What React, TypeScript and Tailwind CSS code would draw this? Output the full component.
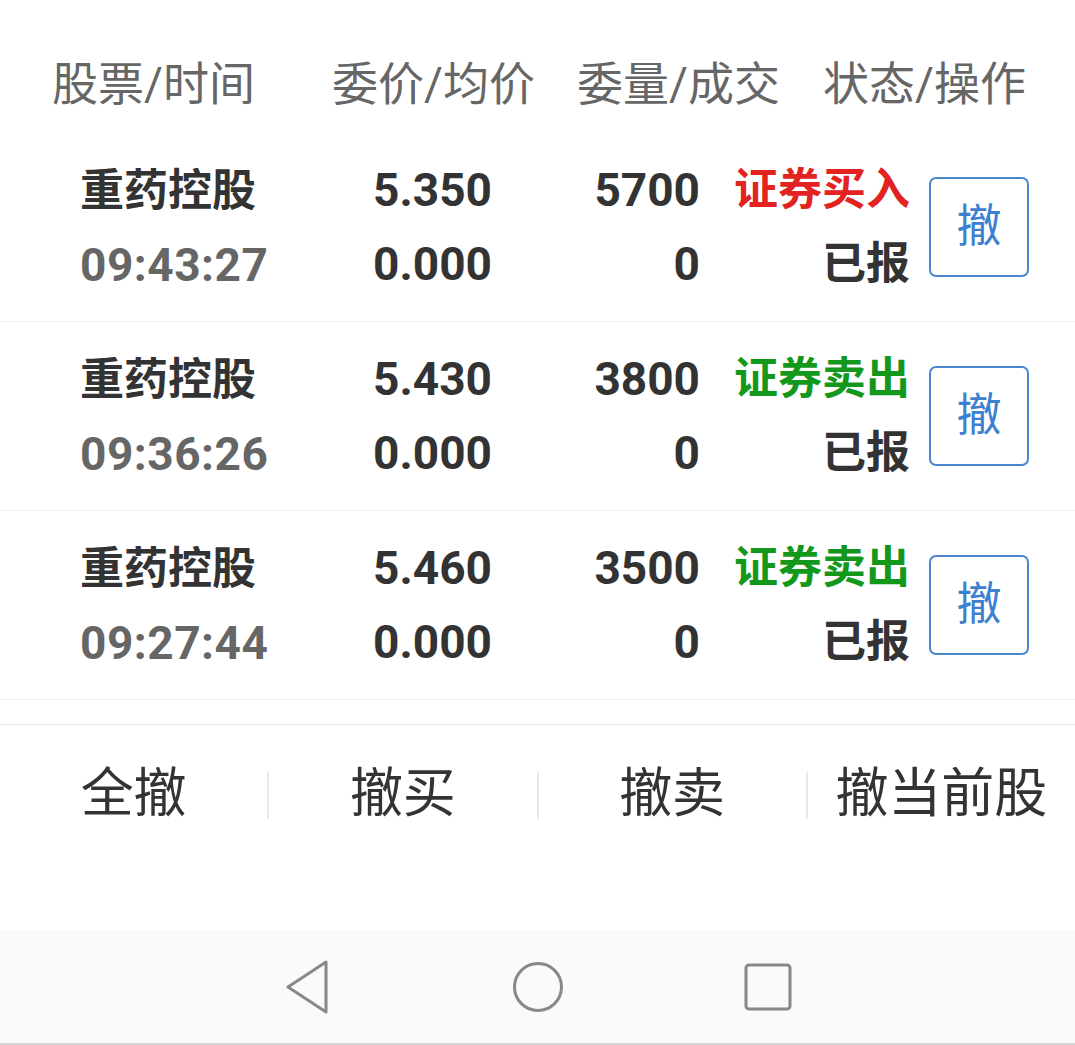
import React from 'react'

type Order = {
  name: string
  time: string
  price: string
  avg: string
  qty: string
  filled: string
  side: 'buy' | 'sell'
  status: string
}

const orders: Order[] = [
  { name: '重药控股', time: '09:43:27', price: '5.350', avg: '0.000', qty: '5700', filled: '0', side: 'buy', status: '已报' },
  { name: '重药控股', time: '09:36:26', price: '5.430', avg: '0.000', qty: '3800', filled: '0', side: 'sell', status: '已报' },
  { name: '重药控股', time: '09:27:44', price: '5.460', avg: '0.000', qty: '3500', filled: '0', side: 'sell', status: '已报' },
]

const font = 'font-[Roboto,"Noto_Sans_CJK_SC",sans-serif]'

function OrderRow({ order }: { order: Order }) {
  return (
    <div className="flex h-[189px] items-center border-b border-[#eeeeee] pl-[80px]">
      <div className="flex w-[220px] flex-col font-bold leading-[74px]">
        <span className="pt-[2px] text-[44px] text-[#333333]">{order.name}</span>
        <span className="text-[46px] tracking-[0.5px] text-[#666666]">{order.time}</span>
      </div>
      <div className="flex w-[192px] flex-col text-right text-[46px] font-bold leading-[74px] text-[#333333]">
        <span>{order.price}</span>
        <span>{order.avg}</span>
      </div>
      <div className="flex w-[208px] flex-col text-right text-[46px] font-bold leading-[74px] text-[#333333]">
        <span>{order.qty}</span>
        <span>{order.filled}</span>
      </div>
      <div className="flex w-[210px] flex-col text-right text-[44px] font-bold leading-[74px]">
        <span className={order.side === 'buy' ? 'text-[#e2231f]' : 'text-[#13981c]'}>
          {order.side === 'buy' ? '证券买入' : '证券卖出'}
        </span>
        <span className="text-[#333333]">{order.status}</span>
      </div>
      <button className="ml-[19px] flex h-[100px] w-[100px] items-center justify-center rounded-[7px] border-2 border-[#4a86cf] text-[45px] text-[#3d7fd0]">
        撤
      </button>
    </div>
  )
}

function NavBack() {
  return (
    <svg width="50" height="54" viewBox="0 0 50 54" fill="none">
      <polygon points="5,27 43,2 43,52" stroke="#888888" strokeWidth="3" strokeLinejoin="round" />
    </svg>
  )
}

function NavHome() {
  return (
    <svg width="54" height="54" viewBox="0 0 54 54" fill="none">
      <circle cx="27" cy="27" r="23.5" stroke="#888888" strokeWidth="3" />
    </svg>
  )
}

function NavRecent() {
  return (
    <svg width="50" height="50" viewBox="0 0 50 50" fill="none">
      <rect x="3" y="3" width="44" height="44" rx="3" stroke="#888888" strokeWidth="3" />
    </svg>
  )
}

export default function App() {
  const actions = ['全撤', '撤买', '撤卖', '撤当前股']

  return (
    <div className={`flex h-[1045px] w-[1075px] flex-col overflow-hidden bg-white ${font}`}>
      {/* header */}
      <div className="flex h-[133px] items-start pl-[52px] pt-[59px] text-[46px] leading-[50px] text-[#666666]">
        <span className="w-[280px]">股票/时间</span>
        <span className="w-[245px]">委价/均价</span>
        <span className="w-[246px]">委量/成交</span>
        <span>状态/操作</span>
      </div>

      {orders.map((o) => (
        <OrderRow key={o.time} order={o} />
      ))}

      <div className="h-[25px] border-b border-[#e6e6e6]" />

      {/* bulk cancel */}
      <div className="flex h-[140px] items-center text-[53px] text-[#333333]">
        {actions.map((a, i) => (
          <React.Fragment key={a}>
            {i > 0 && <div className="h-[47px] w-[2px] bg-[#e8e8e8]" />}
            <div className="flex flex-1 justify-center">{a}</div>
          </React.Fragment>
        ))}
      </div>

      <div className="flex-1" />

      {/* android nav bar */}
      <div className="flex h-[115px] items-center justify-center gap-[178px] border-b-2 border-[#d6d6d6] bg-[#fafafa]">
        <NavBack />
        <NavHome />
        <NavRecent />
      </div>
    </div>
  )
}
